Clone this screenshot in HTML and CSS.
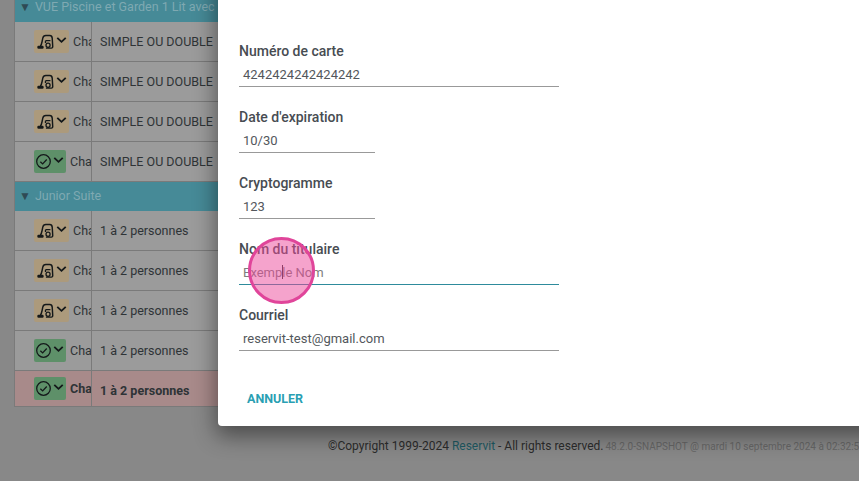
FILE: index.html
```html
<!DOCTYPE html>
<html lang="fr">
<head>
<meta charset="utf-8">
<title>Paiement</title>
<link rel="stylesheet" href="styles.css">
</head>
<body>
<svg class="defs" width="0" height="0" aria-hidden="true">
  <symbol id="vac" viewBox="0 0 20 20">
    <path d="M4 15.5 C5.2 14 5.6 12 6 10 L6.8 6 C7.3 3.8 8.4 3 10.4 3 H15 C17 3 17.7 4 17.9 6 L18.5 15.5 C18.6 17 18 17.8 16.8 17.8 H10.5" fill="none" stroke="currentColor" stroke-width="1.7"/>
    <path d="M10 9 H15.8 M10 9 V11.8" fill="none" stroke="currentColor" stroke-width="1.6"/>
    <circle cx="13" cy="14.4" r="2.4" fill="none" stroke="currentColor" stroke-width="1.5"/>
    <rect x="0.4" y="15" width="7.4" height="3.6" rx="1.4" fill="currentColor"/>
  </symbol>
  <symbol id="chk" viewBox="0 0 20 20">
    <circle cx="10" cy="10" r="8" fill="none" stroke="currentColor" stroke-width="1.5"/>
    <path d="M6.3 10.2 L9 12.8 L13.8 7.6" fill="none" stroke="currentColor" stroke-width="1.5"/>
  </symbol>
  <symbol id="chev" viewBox="0 0 12 8">
    <path d="M1.4 1.6 L6 6 L10.6 1.6" fill="none" stroke="currentColor" stroke-width="2"/>
  </symbol>
</svg>

<main class="page">
  <section class="table">
    <div class="group"><span class="tri">▼</span>VUE Piscine et Garden 1 Lit avec vue sur la piscine</div>
    <div class="row"><div class="c1"><span class="badge tan"><svg class="ic"><use href="#vac"/></svg><svg class="chev"><use href="#chev"/></svg></span><span class="name">Chambre</span></div><div class="c2">SIMPLE OU DOUBLE</div></div>
    <div class="row"><div class="c1"><span class="badge tan"><svg class="ic"><use href="#vac"/></svg><svg class="chev"><use href="#chev"/></svg></span><span class="name">Chambre</span></div><div class="c2">SIMPLE OU DOUBLE</div></div>
    <div class="row"><div class="c1"><span class="badge tan"><svg class="ic"><use href="#vac"/></svg><svg class="chev"><use href="#chev"/></svg></span><span class="name">Chambre</span></div><div class="c2">SIMPLE OU DOUBLE</div></div>
    <div class="row"><div class="c1"><span class="badge green"><svg class="ic"><use href="#chk"/></svg><svg class="chev"><use href="#chev"/></svg></span><span class="name">Chambre</span></div><div class="c2">SIMPLE OU DOUBLE</div></div>
    <div class="group"><span class="tri">▼</span>Junior Suite</div>
    <div class="row"><div class="c1"><span class="badge tan"><svg class="ic"><use href="#vac"/></svg><svg class="chev"><use href="#chev"/></svg></span><span class="name">Chambre</span></div><div class="c2">1 à 2 personnes</div></div>
    <div class="row"><div class="c1"><span class="badge tan"><svg class="ic"><use href="#vac"/></svg><svg class="chev"><use href="#chev"/></svg></span><span class="name">Chambre</span></div><div class="c2">1 à 2 personnes</div></div>
    <div class="row"><div class="c1"><span class="badge tan"><svg class="ic"><use href="#vac"/></svg><svg class="chev"><use href="#chev"/></svg></span><span class="name">Chambre</span></div><div class="c2">1 à 2 personnes</div></div>
    <div class="row"><div class="c1"><span class="badge green"><svg class="ic"><use href="#chk"/></svg><svg class="chev"><use href="#chev"/></svg></span><span class="name">Chambre</span></div><div class="c2">1 à 2 personnes</div></div>
    <div class="row selected"><div class="c1"><span class="badge green"><svg class="ic"><use href="#chk"/></svg><svg class="chev"><use href="#chev"/></svg></span><span class="name">Chambre</span></div><div class="c2">1 à 2 personnes</div></div>
  </section>
  <footer class="footer">©Copyright 1999-2024 <a class="brand">Reservit</a> - All rights reserved. <small class="version">48.2.0-SNAPSHOT @ mardi 10 septembre 2024 à 02:32:55</small></footer>
</main>

<section class="dialog">
  <div class="field"><div class="label">Numéro de carte</div><div class="input">4242424242424242</div></div>
  <div class="field short"><div class="label">Date d'expiration</div><div class="input">10/30</div></div>
  <div class="field short"><div class="label">Cryptogramme</div><div class="input">123</div></div>
  <div class="field focused"><div class="label">Nom du titulaire</div><div class="input placeholder">Exemp<span class="caret"></span>le Nom</div></div>
  <div class="field"><div class="label">Courriel</div><div class="input">reservit-test@gmail.com</div></div>
  <div class="actions"><span class="btn">ANNULER</span></div>
</section>
<div class="click"></div>
</body>
</html>
```
FILE: styles.css
```css
* { box-sizing: border-box; }
html, body { margin: 0; height: 100%; }
body {
  width: 859px; height: 481px; overflow: hidden; position: relative;
  background: #888;
  font-family: Roboto, "Liberation Sans", sans-serif;
  color: #2e3336;
}
.defs { position: absolute; }
.page { height: 481px; overflow: hidden; }
.table {
  margin: -7px 0 0 14px; width: 900px;
  border-left: 1px solid #7a7a7a;
}
.group {
  height: 29px; background: #468a97; color: #7fa9b2;
  font-size: 12.5px; line-height: 27px; padding-left: 4px; white-space: nowrap;
}
.tri { color: #2f4a55; font-size: 12px; margin-right: 4px; }
.row {
  display: flex; height: 40px; background: #9b9b9b;
  border-bottom: 1px solid #7a7a7a;
  font-size: 12.5px; line-height: 39px;
}
.row.selected { background: #a88a8a; font-weight: 700; height: 36px; line-height: 39px; }
.c1 {
  width: 77px; flex: none; display: flex; align-items: center; padding-left: 19px;
  border-right: 1px solid #7a7a7a; overflow: hidden; white-space: nowrap;
}
.c2 { padding-left: 8px; white-space: nowrap; }
.badge {
  display: flex; align-items: center; flex: none; height: 23px; margin-right: 4px;
  border-radius: 2px; color: #14181a; padding-left: 3px;
}
.tan { background: #ac9a7c; width: 35px; }
.green { background: #5e9069; width: 32px; padding-left: 1px; }
.ic { width: 17px; height: 17px; flex: none; }
.chev { width: 11px; height: 8px; margin: 0 0 4px 2px; flex: none; }
.green .chev { margin-left: 1px; }
.footer {
  padding-left: 328px; margin-top: 31px; font-size: 12px; line-height: 16px;
  color: #2c2c2c; white-space: nowrap;
}
.brand { color: #1f5a63; }
.version { font-size: 10px; color: #666; margin-left: -1px; }
.dialog {
  position: absolute; left: 218px; top: -30px; width: 680px; height: 456px;
  background: #fff; border-radius: 4px;
  box-shadow: 0 8px 22px 2px rgba(0,0,0,.45);
  padding: 71px 21px 0;
  display: flex; flex-direction: column;
}
.field { width: 320px; height: 66px; }
.field.short { width: 136px; }
.label {
  font-size: 14px; font-weight: 500; line-height: 20px; color: #474c52;
}
.input {
  margin-top: 4px; height: 22px; padding-left: 4px; font-size: 13px; line-height: 20px;
  color: #53575c; border-bottom: 1px solid #999;
}
.focused .input { border-bottom-color: #2e8b9c; }
.placeholder { color: #7d7d7d; }
.caret {
  display: inline-block; width: 1px; height: 14px; background: #333;
  vertical-align: -2px; margin-right: -1px;
}
.actions { margin-top: 17px; padding-left: 8px; }
.btn { font-size: 12.5px; font-weight: 700; color: #2a9fb3; line-height: 16px; }
.click {
  position: absolute; left: 248px; top: 237px; width: 67px; height: 67px;
  border-radius: 50%;
  background: rgba(236, 72, 153, .5);
  border: 3px solid #e0459a;
}
```
